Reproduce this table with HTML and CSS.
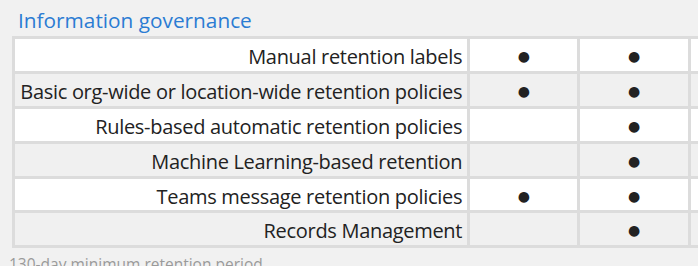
FILE: index.html
```html
<!DOCTYPE html>
<html lang="en">
<head>
    <meta charset="UTF-8">
    <meta name="viewport" content="width=device-width, initial-scale=1.0">
    <title>Information governance</title>
    <link rel="stylesheet" href="styles.css">
</head>
<body>
    <section class="governance">
        <h2 class="section-title">Information governance</h2>
        <table class="feature-table">
            <colgroup>
                <col class="col-label">
                <col class="col-plan">
                <col class="col-plan">
                <col class="col-plan">
            </colgroup>
            <tr>
                <td class="label">Manual retention labels</td>
                <td class="check">●</td>
                <td class="check">●</td>
                <td class="check"></td>
            </tr>
            <tr>
                <td class="label">Basic org-wide or location-wide retention policies</td>
                <td class="check">●</td>
                <td class="check">●</td>
                <td class="check"></td>
            </tr>
            <tr>
                <td class="label">Rules-based automatic retention policies</td>
                <td class="check"></td>
                <td class="check">●</td>
                <td class="check"></td>
            </tr>
            <tr>
                <td class="label">Machine Learning-based retention</td>
                <td class="check"></td>
                <td class="check">●</td>
                <td class="check"></td>
            </tr>
            <tr>
                <td class="label">Teams message retention policies</td>
                <td class="check">●</td>
                <td class="check">●</td>
                <td class="check"></td>
            </tr>
            <tr>
                <td class="label">Records Management</td>
                <td class="check"></td>
                <td class="check">●</td>
                <td class="check"></td>
            </tr>
        </table>
        <p class="footnote">130-day minimum retention period</p>
    </section>
</body>
</html>
```

FILE: styles.css
```css
body {
    font-family: 'Segoe UI', 'Open Sans', 'Noto Sans', sans-serif;
    background-color: #f1f1f1;
    color: #222;
    margin: 0;
    padding: 0;
    overflow: hidden;
}

.governance {
    padding: 8px 0 0 12px;
}

.section-title {
    font-size: 20.8px;
    font-weight: normal;
    line-height: 24px;
    color: #2b7cd3;
    margin: 0 0 4px 6px;
}

.feature-table {
    table-layout: fixed;
    width: 789px;
    border-collapse: separate;
    border-spacing: 3px;
    background-color: #dcdcdc;
    font-size: 20px;
    letter-spacing: -0.3px;
}

.col-label {
    width: 451px;
}

.col-plan {
    width: 107px;
}

.feature-table td {
    height: 28.9px;
    padding: 3px 0 0 0;
    line-height: 27px;
    white-space: nowrap;
}

.feature-table tr:nth-child(odd) td {
    background-color: #fff;
}

.feature-table tr:nth-child(even) td {
    background-color: #f0f0f0;
}

.label {
    text-align: right;
    padding-right: 5px !important;
}

.check {
    text-align: center;
    font-family: 'DejaVu Sans', sans-serif;
    font-size: 14px;
    color: #222;
}

.footnote {
    font-size: 15.5px;
    color: #9a9a9a;
    margin: 5px 0 0 -3px;
}
```
